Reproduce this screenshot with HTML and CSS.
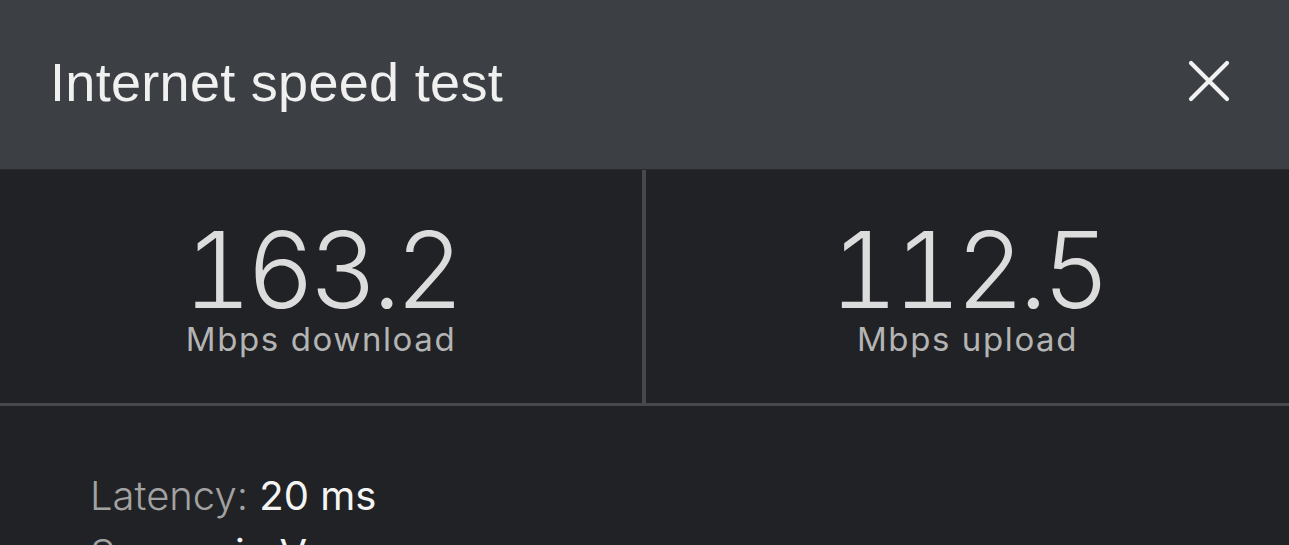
FILE: index.html
```html
<!DOCTYPE html>
<html lang="en">
<head>
  <meta charset="UTF-8" />
  <meta name="viewport" content="width=device-width, initial-scale=1.0"/>
  <title>Internet speed test</title>
  <link rel="stylesheet" href="styles.css">
</head>
<body>

  <header class="top-bar">
    <h1>Internet speed test</h1>
    <button class="close-btn" aria-label="Close">
      <svg width="42" height="42" viewBox="0 0 42 42">
        <path d="M3 3 L39 39 M39 3 L3 39" stroke="#f2f2f2" stroke-width="4.2" stroke-linecap="round"/>
      </svg>
    </button>
  </header>

  <section class="results">
    <div class="result">
      <div class="value">163.2</div>
      <div class="unit">Mbps download</div>
    </div>
    <div class="result">
      <div class="value">112.5</div>
      <div class="unit">Mbps upload</div>
    </div>
  </section>

  <section class="details">
    <p><span class="label">Latency:</span> 20 ms</p>
    <p><span class="label">Server:</span> in Vancouver</p>
  </section>

</body>
</html>
```

FILE: styles.css
```css
body {
  margin: 0;
  background: #212225;
  color: #f2f2f2;
  font-family: 'Inter', 'Liberation Sans', sans-serif;
  height: 545px;
  overflow: hidden;
}

.top-bar {
  background: #3c3f43;
  height: 170px;
  box-sizing: border-box;
  display: flex;
  align-items: center;
  justify-content: space-between;
  padding: 0 59px 6px 50px;
  border-bottom: 1px solid #2a2b2e;
}

.top-bar h1 {
  margin: 0;
  font-family: 'Liberation Sans', Arial, sans-serif;
  font-size: 54px;
  font-weight: 400;
  letter-spacing: 0.3px;
  color: #f0f0f0;
}

.close-btn {
  background: none;
  border: none;
  padding: 0;
  cursor: pointer;
  display: flex;
  margin-bottom: 2px;
}

.results {
  display: grid;
  grid-template-columns: 642px 1fr;
  border-bottom: 3px solid #46484b;
}

.result {
  height: 233px;
  box-sizing: border-box;
  padding-top: 59px;
  display: flex;
  flex-direction: column;
  align-items: center;
}

.result + .result {
  border-left: 4px solid #46484b;
}

.value {
  font-weight: 300;
  font-size: 106px;
  line-height: 82px;
  color: #dcdcdc;
  letter-spacing: -5.5px;
  font-feature-settings: "tnum" 1;
}

.unit {
  margin-top: 10px;
  font-size: 33px;
  line-height: 36px;
  color: #b4b4b4;
  letter-spacing: 1.6px;
}

.details {
  padding: 65px 90px 0;
}

.details p {
  margin: 0 0 8px;
  font-size: 40px;
  line-height: 50px;
  color: #f4f4f4;
}

.label {
  color: #a2a2a2;
  font-weight: 300;
}
```
